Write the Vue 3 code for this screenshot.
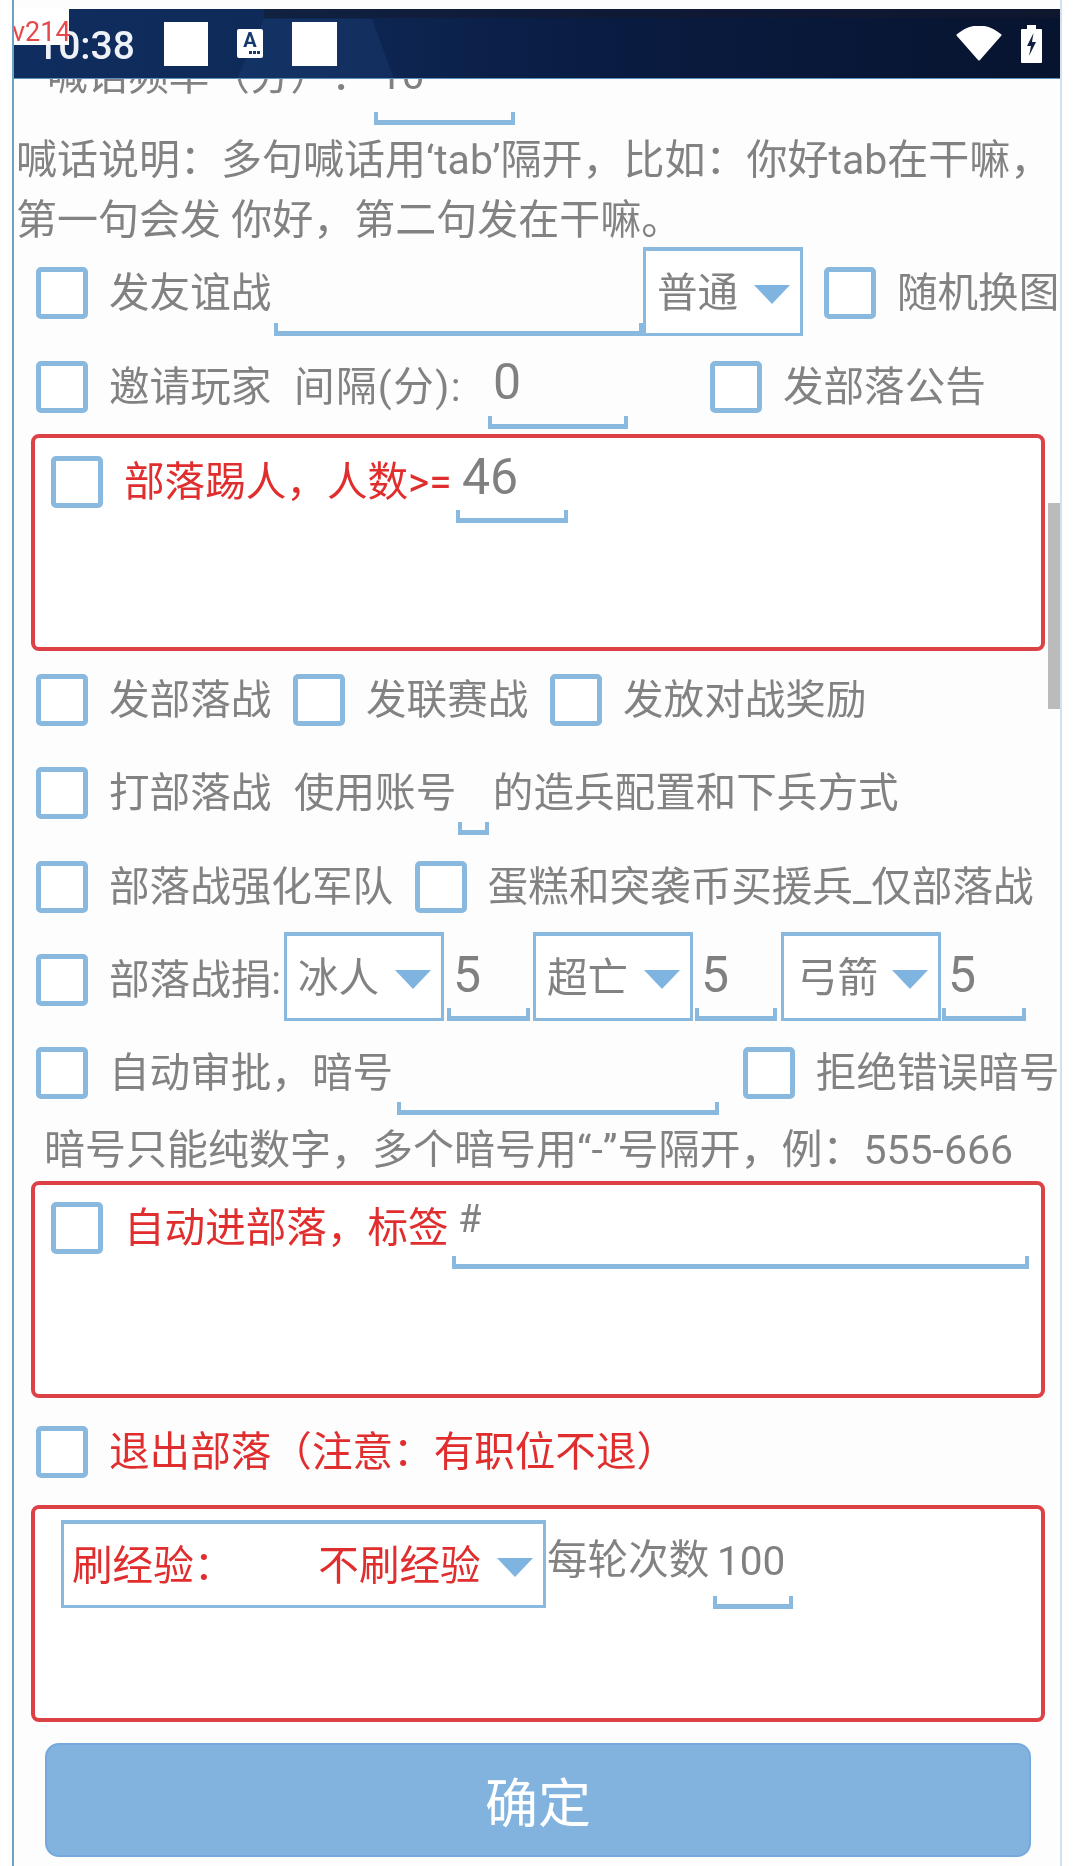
<script setup>
</script>

<template>
  <div class="screen">
    <header class="bar">
      <span class="version">v214</span>
      <span class="time">10:38</span>
      <span class="sq sq-first"></span>
      <span class="a-icon"><b>A</b><i></i></span>
      <span class="sq sq-last"></span>
      <svg class="wifi" width="46" height="35" viewBox="0 0 46 35">
        <path d="M1.5 9 Q23 -8 44.5 9 L23 33.5 Z" fill="#fff" stroke="#fff" stroke-width="2" stroke-linejoin="round" />
      </svg>
      <svg class="battery" width="21" height="38" viewBox="0 0 21 38">
        <path d="M6 0 H15 V4 H20 Q21 4 21 5 V37 Q21 38 20 38 H1 Q0 38 0 37 V5 Q0 4 1 4 H6 Z" fill="#fff" />
        <path d="M12.5 8 L6 21 H10 L8 31 L15 17 H11 Z" fill="#10203f" />
      </svg>
    </header>

    <main class="content">
      <div class="row row0">
        <span class="lbl lbl0">喊话频率（分）：</span>
        <span class="field f0">10</span>
      </div>
      <p class="note">喊话说明：多句喊话用‘tab’隔开，比如：你好tab在干嘛，<br />第一句会发 你好，第二句发在干嘛。</p>

      <div class="row r1">
        <span class="cb"></span>
        <span class="lbl">发友谊战</span>
        <span class="field f1"></span>
        <span class="select s1"><span>普通</span><i class="arrow"></i></span>
        <span class="cb ml21"></span>
        <span class="lbl">随机换图</span>
      </div>

      <div class="row r2">
        <span class="cb"></span>
        <span class="lbl">邀请玩家</span>
        <span class="lbl interval">间隔(分):</span>
        <span class="field big f2">0</span>
        <span class="cb cb-notice"></span>
        <span class="lbl">发部落公告</span>
      </div>

      <section class="redbox box1">
        <div class="row inner1">
          <span class="cb"></span>
          <span class="lbl red kick">部落踢人，人数&gt;=</span>
          <span class="field big f-kick">46</span>
        </div>
      </section>

      <div class="row r3">
        <span class="cb"></span>
        <span class="lbl">发部落战</span>
        <span class="cb gap-cb"></span>
        <span class="lbl">发联赛战</span>
        <span class="cb gap-cb"></span>
        <span class="lbl">发放对战奖励</span>
      </div>

      <div class="row r4">
        <span class="cb"></span>
        <span class="lbl">打部落战</span>
        <span class="lbl account">使用账号</span>
        <span class="field f-acc"></span>
        <span class="lbl ml4">的造兵配置和下兵方式</span>
      </div>

      <div class="row r5">
        <span class="cb"></span>
        <span class="lbl">部落战强化军队</span>
        <span class="cb gap-cb"></span>
        <span class="lbl">蛋糕和突袭币买援兵_仅部落战</span>
      </div>

      <div class="row r6">
        <span class="cb"></span>
        <span class="lbl donate">部落战捐:</span>
        <span class="select s-don"><span>冰人</span><i class="arrow"></i></span>
        <span class="field big f-don d1">5</span>
        <span class="select s-don d1"><span>超亡</span><i class="arrow"></i></span>
        <span class="field big f-don d2">5</span>
        <span class="select s-don d3"><span>弓箭</span><i class="arrow"></i></span>
        <span class="field big f-don d4">5</span>
      </div>

      <div class="row r7">
        <span class="cb"></span>
        <span class="lbl">自动审批，暗号</span>
        <span class="field f-code"></span>
        <span class="cb cb-reject"></span>
        <span class="lbl">拒绝错误暗号</span>
      </div>

      <p class="note note2">暗号只能纯数字，多个暗号用“-”号隔开，例：555-666</p>

      <section class="redbox box2">
        <div class="row inner2">
          <span class="cb"></span>
          <span class="lbl red tag">自动进部落，标签</span>
          <span class="field f-tag">#</span>
        </div>
      </section>

      <div class="row r8">
        <span class="cb"></span>
        <span class="lbl red">退出部落（注意：有职位不退）</span>
      </div>

      <section class="redbox box3">
        <div class="row inner3">
          <span class="select s-exp">
            <span class="red exp-name">刷经验：</span>
            <span class="red exp-val">不刷经验</span>
            <i class="arrow"></i>
          </span>
          <span class="lbl rounds">每轮次数</span>
          <span class="field f-rounds">100</span>
        </div>
      </section>

      <button class="ok" type="button">确定</button>
    </main>

    <div class="scrollbar"></div>
  </div>
</template>

<style>
html, body { margin: 0; background: #fff; }
</style>

<style scoped>
.screen {
  position: relative;
  box-sizing: border-box;
  width: 1050px;
  height: 1866px;
  margin-left: 12px;
  padding-top: 9px;
  overflow: hidden;
  background: #fdfdfd;
  border-left: 2px solid #6da2c4;
  border-right: 2px solid #cfe2ee;
  font-family: Roboto, "Noto Sans CJK SC", sans-serif;
  font-size: 40.6px;
  color: #828282;
  text-spacing-trim: space-all;
  filter: blur(0.7px);
}

/* status bar */
.bar {
  position: relative;
  display: flex;
  align-items: center;
  height: 70px;
  margin: 0 -2px;
  padding-left: 24px;
  box-sizing: border-box;
  background: linear-gradient(90deg, #0f2d5f 0, #0e2a58 25%, #0a1c42 55%, #07142f 100%);
  border-bottom: 1px solid #5f8fbb;
}
.bar::before {
  content: "";
  position: absolute;
  inset: 0;
  background: rgba(40, 84, 145, 0.22);
  clip-path: polygon(225px 70px, 252px 10px, 360px 10px, 382px 70px);
}
.bar::after {
  content: "";
  position: absolute;
  left: 252px;
  right: 0;
  top: 0;
  height: 9px;
  background: rgba(20, 25, 45, 0.55);
}
.bar > * { position: relative; z-index: 1; flex: none; }
.version {
  position: absolute;
  left: 0;
  top: 0;
  z-index: 2;
  width: 57px;
  height: 36px;
  background: #fff;
  color: #e6484a;
  font-size: 27px;
  line-height: 46px;
  white-space: nowrap;
}
.time {
  width: 100px;
  color: #eef2f7;
  font-size: 39px;
  font-weight: 500;
  line-height: 46px;
  margin-top: 4px;
}
.sq { width: 44px; height: 44px; background: #fff; }
.sq-first { margin-left: 28px; }
.sq-last { margin-left: 29px; width: 45px; }
.a-icon {
  display: flex;
  flex-direction: column;
  align-items: center;
  width: 26px;
  height: 29px;
  margin-left: 29px;
  background: #fff;
  border-radius: 2px;
  color: #153a6b;
  font-size: 20px;
  line-height: 22px;
}
.a-icon i {
  display: block;
  width: 11px;
  height: 3px;
  margin: 0 0 0 8px;
  background: repeating-linear-gradient(90deg, #153a6b 0 3px, transparent 3px 4px);
}
.wifi { margin-left: 619px; }
.battery { margin-left: 19px; }

/* page */
.content {
  height: 1787px;
  overflow: hidden;
}
.row {
  display: flex;
  align-items: center;
  box-sizing: border-box;
  padding-left: 22px;
  white-space: nowrap;
}
.cb {
  flex: none;
  box-sizing: border-box;
  width: 52px;
  height: 52px;
  background: #fff;
  border: 5px solid #8ab9e0;
  border-radius: 5px;
}
.lbl { flex: none; line-height: 60px; }
.cb + .lbl { margin-left: 21px; }
.red { color: #e02d2d; }
.gap-cb { margin-left: 21.7px; }
.ml21 { margin-left: 21px; }
.ml4 { margin-left: 4px; }

.field {
  position: relative;
  flex: none;
  align-self: flex-end;
  box-sizing: border-box;
  color: #808080;
}
.field::after {
  content: "";
  position: absolute;
  left: 0;
  right: 0;
  bottom: 0;
  height: 13px;
  box-sizing: border-box;
  border: solid #8ab9e0;
  border-width: 0 4px 5px;
}
.big { font-size: 50px; }

.select {
  flex: none;
  align-self: flex-end;
  display: flex;
  align-items: center;
  box-sizing: border-box;
  width: 160px;
  height: 89px;
  padding: 0 10px 5px 11px;
  background: #fff;
  border: 3px solid #8ab9e0;
  border-top-width: 4px;
}
.arrow {
  width: 0;
  height: 0;
  margin: 10px 0 0 auto;
  border-style: solid;
  border-width: 19px 18px 0;
  border-color: #7fb3e0 transparent transparent;
}

.row0 { height: 79px; margin-top: -33px; padding-left: 33px; }
.lbl0 { width: 327px; align-self: flex-start; }
.f0 { width: 141px; height: 79px; padding-left: 5px; line-height: 58px; }

.note { margin: 5px 0 0 2px; font-size: 41px; line-height: 60px; white-space: nowrap; height: 120px; }
.note2 { margin: 5px 0 0 30px; height: 60px; }

.r1 { height: 86px; }
.f1 { width: 369px; height: 86px; margin-left: 2.6px; }

.r2 { height: 84px; margin-top: 9px; }
.interval { width: 194px; margin-left: 22.6px; letter-spacing: 1.4px; }
.f2 { width: 140px; height: 84px; padding-left: 5px; line-height: 74px; }
.cb-notice { margin-left: 82px; }

.redbox {
  box-sizing: border-box;
  width: 1014px;
  height: 217px;
  margin-left: 17px;
  background: #fff;
  border: 4px solid #dc4145;
  border-radius: 8px;
}
.box1 { margin-top: 5px; }
.inner1 { height: 85px; padding-top: 2px; padding-left: 16px; }
.kick { width: 332px; }
.f-kick { width: 112px; height: 82px; padding-left: 6px; line-height: 72px; }

.r3 { height: 76px; margin-top: 11px; }

.r4 { height: 84px; margin-top: 13px; }
.account { margin-left: 22.6px; }
.f-acc { width: 31px; height: 40px; margin-left: 1.6px; }

.r5 { height: 80px; margin-top: 12px; }

.r6 { height: 82px; margin-top: 12px; }
.donate { width: 175px; }
.f-don { width: 83px; height: 82px; padding-left: 6px; line-height: 72px; }
.f-don.d1 { margin-left: 3px; }
.s-don.d1 { margin-left: 3px; }
.f-don.d2 { margin-left: 2px; width: 82px; }
.s-don.d3 { margin-left: 4px; padding-left: 13px; }
.f-don.d4 { margin-left: 1px; width: 84px; }

.r7 { height: 84px; margin-top: 10px; }
.f-code { width: 322px; height: 60px; margin-left: 3.8px; }
.cb-reject { margin-left: 24px; }

.box2 { margin-top: 1px; }
.inner2 { height: 84px; padding-top: 1px; padding-left: 16px; }
.tag { width: 328px; }
.f-tag { width: 577px; height: 82px; padding-left: 6px; font-size: 38px; line-height: 64px; }

.r8 { height: 74px; margin-top: 17px; }

.box3 { margin-top: 16px; }
.inner3 { height: 89px; margin-top: 11px; padding-left: 26px; }
.s-exp { width: 485px; height: 88px; align-self: flex-start; padding-left: 8px; }
.exp-val { margin-left: 84px; }
.rounds { margin-left: 1px; margin-bottom: 10px; }
.f-rounds { width: 80px; height: 89px; margin-left: 3.6px; padding-left: 4px; line-height: 82px; }

.ok {
  display: block;
  box-sizing: border-box;
  width: 986px;
  height: 114px;
  margin: 21px 0 0 31px;
  padding: 0;
  background: #81b3de;
  border: 2px solid #76a9dc;
  border-radius: 14px;
  color: #fff;
  font: inherit;
  font-size: 53px;
}

.scrollbar {
  position: absolute;
  right: 0;
  top: 503px;
  width: 12px;
  height: 206px;
  background: #bbb;
}
</style>
